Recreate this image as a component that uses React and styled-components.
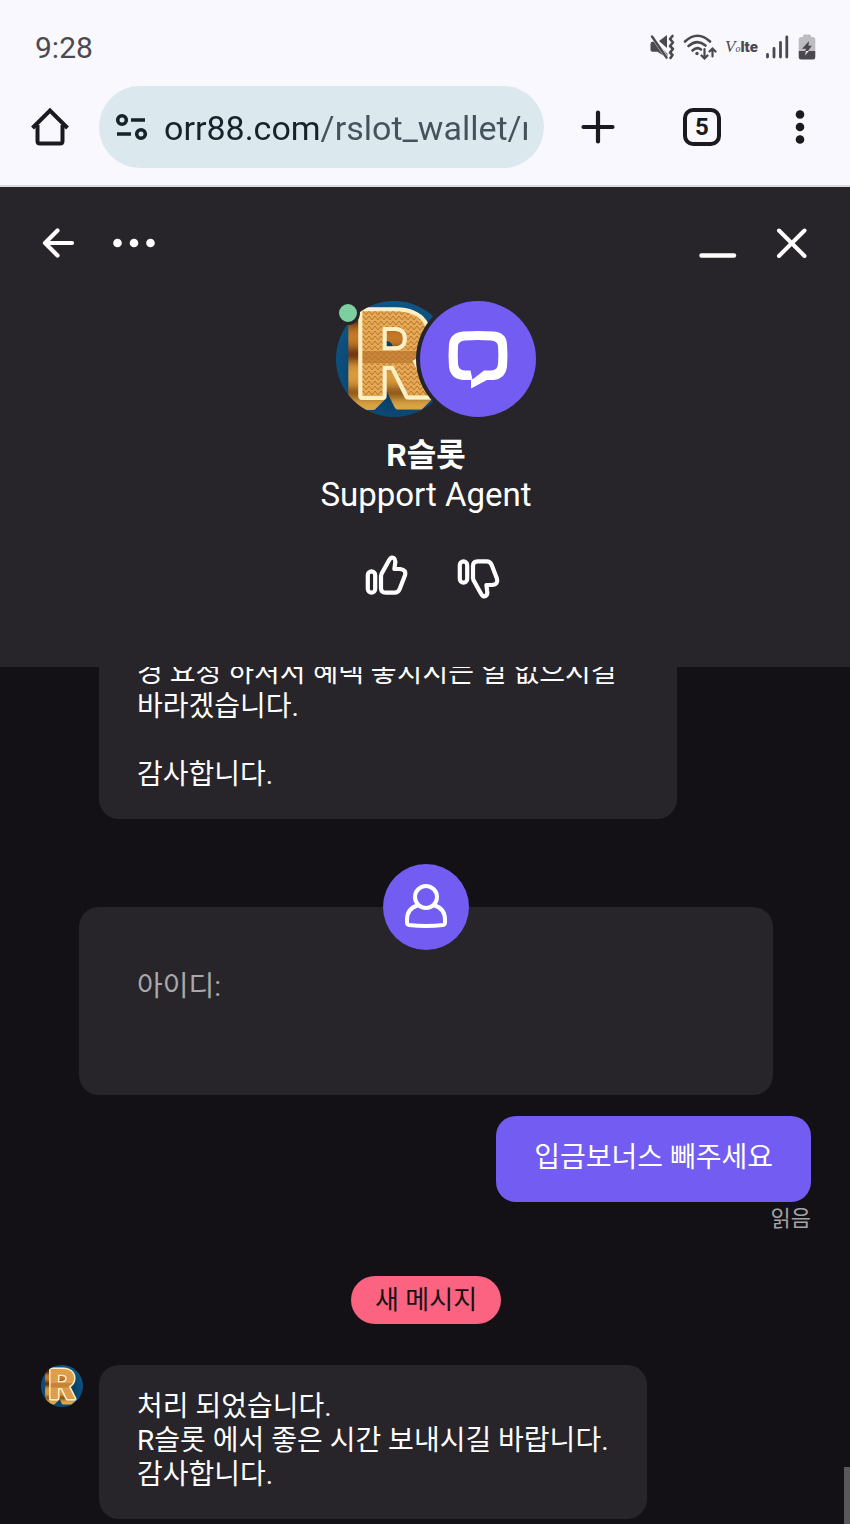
import React from "react";
import styled, { createGlobalStyle } from "styled-components";

const GoldBadge = ({ id }) => (
  <svg viewBox="0 0 116 116" width="100%" height="100%" aria-hidden="true">
    <defs>
      <clipPath id={`${id}-round`}>
        <circle cx="58" cy="58" r="58" />
      </clipPath>
      <radialGradient id={`${id}-sea`} cx="50%" cy="60%" r="60%">
        <stop offset="0" stopColor="#072f50" />
        <stop offset="1" stopColor="#0d5687" />
      </radialGradient>
      <pattern id={`${id}-weave`} width="6" height="116" patternUnits="userSpaceOnUse">
        <rect width="6" height="116" fill="#e6aa55" />
        <rect y="50" width="6" height="12" fill="#c98539" />
        {Array.from({ length: 23 }, (_, i) => (
          <path
            key={i}
            d={`M0 ${i * 5 + 4} L3 ${i * 5} L6 ${i * 5 + 4}`}
            fill="none"
            stroke="#b8742f"
            strokeWidth="1"
          />
        ))}
      </pattern>
      {/* solid sides: shifted copies of the letter, coloured in bands */}
      <filter
        id={`${id}-depth`}
        filterUnits="userSpaceOnUse"
        primitiveUnits="userSpaceOnUse"
        x="0"
        y="0"
        width="116"
        height="116"
      >
        {[2, 4, 6, 8, 10].map((d) => (
          <feOffset key={d} in="SourceAlpha" dx={-d} dy={d} result={`s${d}`} />
        ))}
        <feMerge result="solid">
          <feMergeNode in="s2" />
          <feMergeNode in="s4" />
          <feMergeNode in="s6" />
          <feMergeNode in="s8" />
          <feMergeNode in="s10" />
        </feMerge>
        <feFlood x="0" y="0" width="116" height="26" floodColor="#4a1d0a" result="b1" />
        <feFlood x="0" y="26" width="116" height="20" floodColor="#c47a25" result="b2" />
        <feFlood x="0" y="46" width="116" height="16" floodColor="#6b2c0b" result="b3" />
        <feFlood x="0" y="62" width="116" height="24" floodColor="#d99a3a" result="b4" />
        <feFlood x="0" y="86" width="116" height="12" floodColor="#7a3f10" result="b5" />
        <feFlood x="0" y="98" width="116" height="18" floodColor="#dfa844" result="b6" />
        <feMerge result="bands">
          <feMergeNode in="b1" />
          <feMergeNode in="b2" />
          <feMergeNode in="b3" />
          <feMergeNode in="b4" />
          <feMergeNode in="b5" />
          <feMergeNode in="b6" />
        </feMerge>
        <feGaussianBlur in="bands" stdDeviation="0 5" result="soft" />
        <feComposite in="soft" in2="solid" operator="in" result="sides" />
        <feMerge>
          <feMergeNode in="sides" />
          <feMergeNode in="SourceGraphic" />
        </feMerge>
      </filter>
    </defs>
    <g clipPath={`url(#${id}-round)`}>
      <rect width="116" height="116" fill={`url(#${id}-sea)`} />
      <text
        x="20"
        y="95"
        fill={`url(#${id}-weave)`}
        stroke="#fff0c4"
        strokeWidth="8"
        strokeLinejoin="round"
        paintOrder="stroke"
        filter={`url(#${id}-depth)`}
        fontFamily="Roboto, 'Liberation Sans', sans-serif"
        fontWeight="900"
        fontSize="118"
      >
        R
      </text>
    </g>
  </svg>
);

const MuteIcon = () => (
  <svg width="25" height="26" viewBox="0 0 25 26" fill="#4b494f" aria-hidden="true">
    <path d="M0.500 10 Q0.500 7.800 2.500 7.800 H6 L17.500 20 V24.500 L7.500 17.800 H2.500 Q0.500 17.800 0.500 16 Z" />
    <path d="M9 7 L17 1 V14 Z" />
    <path d="M2 2 L17 24" stroke="#f9f8ff" strokeWidth="3.500" />
    <path d="M2 2.500 L16.500 23.500" stroke="#4b494f" strokeWidth="2.400" strokeLinecap="round" />
    <path
      d="M22.500 2 L20 5 L23 8.500 L20 12 L23 15 L20 18.500 L22.500 21 L20.500 24"
      fill="none"
      stroke="#4b494f"
      strokeWidth="2.600"
      strokeLinecap="round"
      strokeLinejoin="round"
    />
  </svg>
);

const WifiIcon = () => (
  <svg
    width="34"
    height="26"
    viewBox="0 0 34 26"
    fill="none"
    stroke="#4b494f"
    strokeWidth="2.600"
    strokeLinecap="round"
    aria-hidden="true"
  >
    <path d="M2 7.500 Q14.500 -4 27 7.500" />
    <path d="M5.500 12 Q14 4.500 22.500 11.500" />
    <path d="M9.500 16.500 Q14 12.500 18 15.500" />
    <circle cx="14" cy="19.500" r="1.700" fill="#4b494f" stroke="none" />
    <path d="M21.500 15 V24 M18.500 21.500 L21.500 24.500 L24.500 21.500" strokeWidth="2.200" />
    <path d="M29.500 22.500 V15 M26.500 17.500 L29.500 14.500 L32.500 17.500" strokeWidth="2.200" />
  </svg>
);

const SignalIcon = () => (
  <svg width="24" height="26" viewBox="0 0 24 26" stroke="#4b494f" strokeWidth="2.800" strokeLinecap="round" aria-hidden="true">
    <path d="M1.500 20.500 V23 M8 14.500 V23 M14.500 8.500 V23 M20.800 3 V23" />
  </svg>
);

const BatteryIcon = () => (
  <svg width="18" height="28" viewBox="0 0 18 28" aria-hidden="true">
    <path
      d="M5 4 V3 Q5 1.500 6.500 1.500 H11.500 Q13 1.500 13 3 V4 H15 Q17.300 4 17.300 6.500 V18 H0.700 V6.500 Q0.700 4 3 4 Z"
      fill="#bdbcc1"
    />
    <path d="M0.700 18 H17.300 V24 Q17.300 26.500 15 26.500 H3 Q0.700 26.500 0.700 24 Z" fill="#4b494f" />
    <path d="M11 8 L4 15.800 H8 L7 19 H9 L14 12.800 H10.500 Z" fill="#4b494f" />
    <path d="M8 18 L7 22.500 L10.800 18 Z" fill="#e9e8ee" />
  </svg>
);

const HomeIcon = () => (
  <svg width="38" height="40" viewBox="0 0 38 40" fill="none" stroke="#1b1a20" strokeWidth="4" aria-hidden="true">
    <path d="M1.500 21 L19 3.500 L36.500 21" />
    <path d="M6.500 18 V34 Q6.500 36.500 9 36.500 H29 Q31.500 36.500 31.500 34 V18" />
  </svg>
);

const TuneIcon = () => (
  <svg width="34" height="28" viewBox="0 0 34 28" fill="none" stroke="#15232b" strokeWidth="3.600" aria-hidden="true">
    <circle cx="8" cy="7" r="4.300" />
    <path d="M17 7 H31 M3 21 H17" />
    <circle cx="27" cy="21" r="4.300" />
  </svg>
);

const PlusIcon = () => (
  <svg width="34" height="34" viewBox="0 0 34 34" stroke="#1b1a20" strokeWidth="4.200" strokeLinecap="round" aria-hidden="true">
    <path d="M17 2.500 V31.500 M2.500 17 H31.500" />
  </svg>
);

const KebabIcon = () => (
  <svg width="12" height="34" viewBox="0 0 12 34" fill="#1b1a20" aria-hidden="true">
    <circle cx="6" cy="4.500" r="4.300" />
    <circle cx="6" cy="17" r="4.300" />
    <circle cx="6" cy="29.500" r="4.300" />
  </svg>
);

const BackIcon = () => (
  <svg width="36" height="36" viewBox="0 0 36 36" fill="none" stroke="#fff" strokeWidth="4.200" strokeLinecap="round" strokeLinejoin="round" aria-hidden="true">
    <path d="M31 18 H4 M16.500 5.500 L4 18 L16.500 30.500" />
  </svg>
);

const MoreIcon = () => (
  <svg width="44" height="36" viewBox="0 0 44 36" fill="#fff" aria-hidden="true">
    <circle cx="4.500" cy="18" r="4.300" />
    <circle cx="21" cy="18" r="4.300" />
    <circle cx="37.500" cy="18" r="4.300" />
  </svg>
);

const MinimizeIcon = () => (
  <svg width="40" height="36" viewBox="0 0 40 36" stroke="#fff" strokeWidth="4.400" strokeLinecap="round" aria-hidden="true">
    <path d="M2.500 30.500 H35" />
  </svg>
);

const CloseIcon = () => (
  <svg width="36" height="36" viewBox="0 0 36 36" stroke="#fff" strokeWidth="4" strokeLinecap="round" aria-hidden="true">
    <path d="M4 5.500 L29.500 31 M29.500 5.500 L4 31" />
  </svg>
);

const ThumbIcon = ({ down }) => (
  <svg width="46" height="46" viewBox="0 0 46 46" fill="none" stroke="#fff" strokeWidth="4.200" strokeLinejoin="round" aria-hidden="true">
    <g transform={down ? "translate(0 44) scale(1 -1)" : undefined}>
      <rect x="3.800" y="16.300" width="7.400" height="21.400" rx="3.700" />
      <path d="M17 21 Q17.200 19 18.400 17.300 L25.200 5 Q27.200 1.500 29.700 3 Q31.800 4.500 31.200 8 L30.400 14 H36.200 Q42.700 14.800 40.900 20.500 L35.700 34 Q34.200 37.700 30.700 37.700 H21.700 Q17 37.700 17 33 Z" />
    </g>
  </svg>
);

const ChatLogo = () => (
  <svg viewBox="0 0 116 116" width="100%" height="100%" aria-hidden="true">
    <path
      fill="#fff"
      fillRule="evenodd"
      d="M43 30.500 Q58 29.500 73 30.500 Q86 31 87 43 Q88 54 87 66 Q85.500 77.500 74 79 H67 L51 87.500 V79 H43 Q30.500 78 29 66 Q28 54 29 43 Q30.500 31.500 43 30.500 Z M45 39.500 Q58 38.500 71 39.500 Q77.500 40 78 45 Q78.800 54 78 63 Q77.500 69 71 69.500 H64 L52.500 78.500 L50.500 69.500 H45 Q38.500 69 38 63 Q37.500 54 38 45 Q38.500 40 45 39.500 Z"
    />
  </svg>
);

const PersonIcon = () => (
  <svg viewBox="0 0 86 86" width="100%" height="100%" fill="none" stroke="#fff" strokeWidth="4" aria-hidden="true">
    <circle cx="43" cy="33" r="11" />
    <path d="M34.500 41.500 C27.500 43.500 24 49 24 56 V58.500 Q24 60.500 26 61 Q43 62.800 60 61 Q62 60.500 62 58.500 V56 C62 49 58.500 43.500 51.500 41.500" />
  </svg>
);

const App = () => {
  return (
    <>
      <GlobalStyle />
      <Page>
        <StatusBar>
          <Clock>9:28</Clock>
          <StatusIcons>
            <MuteIcon />
            <WifiIcon />
            <Volte>
              <i>V</i>
              <small>o</small>
              <b>lte</b>
            </Volte>
            <SignalIcon />
            <BatteryIcon />
          </StatusIcons>
        </StatusBar>

        <BrowserBar>
          <IconButton aria-label="Home">
            <HomeIcon />
          </IconButton>
          <AddressBar>
            <TuneIcon />
            <AddressInput
              type="text"
              aria-label="Address"
              defaultValue="orr88.com/rslot_wallet/r"
            />
          </AddressBar>
          <IconButton $width="108px" aria-label="New tab">
            <PlusIcon />
          </IconButton>
          <IconButton $width="100px" aria-label="Tabs">
            <TabCount>5</TabCount>
          </IconButton>
          <IconButton $width="96px" aria-label="Menu">
            <KebabIcon />
          </IconButton>
        </BrowserBar>

        <ChatHeader>
          <HeaderTools>
            <ToolGroup>
              <IconButton aria-label="Back">
                <BackIcon />
              </IconButton>
              <IconButton aria-label="More">
                <MoreIcon />
              </IconButton>
            </ToolGroup>
            <ToolGroup>
              <IconButton aria-label="Minimize">
                <MinimizeIcon />
              </IconButton>
              <IconButton aria-label="Close">
                <CloseIcon />
              </IconButton>
            </ToolGroup>
          </HeaderTools>
          <Avatars>
            <AgentAvatar>
              <GoldBadge id="agent" />
              <OnlineDot />
            </AgentAvatar>
            <BrandAvatar>
              <ChatLogo />
            </BrandAvatar>
          </Avatars>
          <AgentName>R슬롯</AgentName>
          <AgentRole>Support Agent</AgentRole>
          <Rating>
            <IconButton aria-label="Good">
              <ThumbIcon />
            </IconButton>
            <IconButton aria-label="Bad">
              <ThumbIcon down />
            </IconButton>
          </Rating>
        </ChatHeader>

        <Feed>
          <AgentRow>
            <AvatarSlot />
            <Bubble>
              <p>경 요청 하셔서 혜택 놓치시는 일 없으시길 바라겠습니다.</p>
              <br />
              <p>감사합니다.</p>
            </Bubble>
          </AgentRow>

          <FormCard>
            <PersonBadge>
              <PersonIcon />
            </PersonBadge>
            <p>아이디:</p>
          </FormCard>

          <VisitorMessage>
            <Bubble $own>
              <p>입금보너스 빼주세요</p>
            </Bubble>
            <ReadMark>읽음</ReadMark>
          </VisitorMessage>

          <NewMessage>새 메시지</NewMessage>

          <AgentRow>
            <AvatarSlot>
              <GoldBadge id="message" />
            </AvatarSlot>
            <Bubble>
              <p>처리 되었습니다.</p>
              <p>R슬롯 에서 좋은 시간 보내시길 바랍니다.</p>
              <p>감사합니다.</p>
            </Bubble>
          </AgentRow>
          <ScrollThumb />
        </Feed>
      </Page>
    </>
  );
};

export default App;

const GlobalStyle = createGlobalStyle`
  * {
    box-sizing: border-box;
  }

  body {
    margin: 0;
    background: #131115;
    font-family: Roboto, "Noto Sans CJK KR", sans-serif;
  }

  p, h1 {
    margin: 0;
  }
`;

const Page = styled.div`
  display: flex;
  flex-direction: column;
  height: 100vh;
`;

const StatusBar = styled.div`
  flex-shrink: 0;
  display: flex;
  justify-content: space-between;
  align-items: center;
  height: 86px;
  padding: 8px 34px 0 35px;
  background: #f9f8ff;
`;

const Clock = styled.span`
  color: #4b494f;
  font-size: 30px;
`;

const StatusIcons = styled.div`
  display: flex;
  align-items: center;
  gap: 8px;
`;

const Volte = styled.span`
  display: flex;
  align-items: baseline;
  width: 33px;
  color: #4b494f;
  line-height: 26px;

  i {
    font: italic 400 17px "Liberation Serif", serif;
  }

  small {
    font: italic 400 10px "Liberation Serif", serif;
  }

  b {
    font: 900 15px Roboto, sans-serif;
  }
`;

const BrowserBar = styled.div`
  flex-shrink: 0;
  display: flex;
  align-items: center;
  padding: 0 2px 17px 31px;
  background: #f9f8ff;
  border-bottom: 2px solid #dcdae0;
`;

const IconButton = styled.button`
  display: flex;
  justify-content: center;
  align-items: center;
  width: ${({ $width }) => $width || "auto"};
  padding: 0;
  border: none;
  background: none;
  cursor: pointer;
`;

const AddressBar = styled.div`
  flex: 1;
  min-width: 0;
  display: flex;
  align-items: center;
  gap: 16px;
  height: 82px;
  margin-left: 30px;
  padding: 0 17px 0 15px;
  border-radius: 41px;
  background: #dbe8ee;

  svg {
    flex-shrink: 0;
  }
`;

const AddressInput = styled.input`
  flex: 1;
  min-width: 0;
  height: 48px;
  padding: 2px 0 0;
  border: none;
  outline: none;
  /* the host is darker than the path */
  background: linear-gradient(90deg, #15232b 156px, #44535b 156px);
  background-clip: text;
  color: transparent;
  font-family: Roboto, sans-serif;
  font-size: 34px;
`;

const TabCount = styled.span`
  display: flex;
  justify-content: center;
  align-items: center;
  width: 38px;
  height: 38px;
  border: 4px solid #1b1a20;
  border-radius: 10px;
  color: #1b1a20;
  font: 700 24px Roboto, sans-serif;
`;

const ChatHeader = styled.header`
  flex-shrink: 0;
  display: flex;
  flex-direction: column;
  align-items: center;
  padding: 38px 39px 66px 41px;
  background: #27252a;
  color: #fff;
`;

const HeaderTools = styled.div`
  align-self: stretch;
  display: flex;
  justify-content: space-between;
`;

const ToolGroup = styled.div`
  display: flex;
  gap: 36px;
`;

const Avatars = styled.div`
  display: flex;
  margin-top: 40px;
  padding-left: 20px;
`;

const AgentAvatar = styled.div`
  position: relative;
  width: 116px;
  height: 116px;
`;

const OnlineDot = styled.span`
  position: absolute;
  top: 0;
  left: 0;
  width: 24px;
  height: 24px;
  border: 3px solid #27252a;
  border-radius: 50%;
  background: #7dcfa2;
`;

const BrandAvatar = styled.div`
  position: relative;
  width: 116px;
  height: 116px;
  margin-left: -32px;
  border-radius: 50%;
  background: #725cf2;
  box-shadow: 0 0 0 4px #27252a;
`;

const AgentName = styled.h1`
  margin-top: 19px;
  font-size: 32px;
  font-weight: 700;
  line-height: 39px;
`;

const AgentRole = styled.p`
  font-size: 33px;
  line-height: 39px;
`;

const Rating = styled.div`
  display: flex;
  gap: 46px;
  margin-top: 41px;
  padding-left: 14px;
`;

const Feed = styled.main`
  position: relative;
  flex: 1;
  min-height: 0;
  display: flex;
  flex-direction: column;
  justify-content: flex-end;
  overflow: hidden;
  padding: 0 39px 5px 41px;
  color: #fff;
  font-size: 28px;
  line-height: 34px;
  word-break: keep-all;
`;

const AgentRow = styled.div`
  display: flex;
  align-items: flex-start;
  gap: 16px;
`;

const AvatarSlot = styled.div`
  flex-shrink: 0;
  width: 42px;
  height: 42px;
`;

const Bubble = styled.div`
  max-width: 75%;
  padding: 25px 38px 27px;
  border-radius: 20px;
  background: ${({ $own }) => ($own ? "#725cf2" : "#27252a")};
`;

const FormCard = styled.section`
  position: relative;
  min-height: 188px;
  margin: 88px 38px 0;
  padding: 63px 58px;
  border-radius: 20px;
  background: #27252a;
  color: #a9a8ab;
`;

const PersonBadge = styled.div`
  position: absolute;
  top: -43px;
  left: calc(50% - 43px);
  width: 86px;
  height: 86px;
  border-radius: 50%;
  background: #725cf2;
`;

const VisitorMessage = styled.div`
  display: flex;
  flex-direction: column;
  align-items: flex-end;
  margin-top: 21px;
`;

const ReadMark = styled.span`
  color: #a3a2a5;
  font-size: 22px;
  line-height: 34px;
`;

const NewMessage = styled.div`
  align-self: center;
  margin: 40px 0 41px;
  padding: 0 24px;
  border-radius: 24px;
  background: #fb6380;
  color: #131115;
  font-size: 26px;
  line-height: 48px;
`;

const ScrollThumb = styled.span`
  position: absolute;
  right: 0;
  bottom: 0;
  width: 6px;
  height: 57px;
  background: #58575b;
`;
